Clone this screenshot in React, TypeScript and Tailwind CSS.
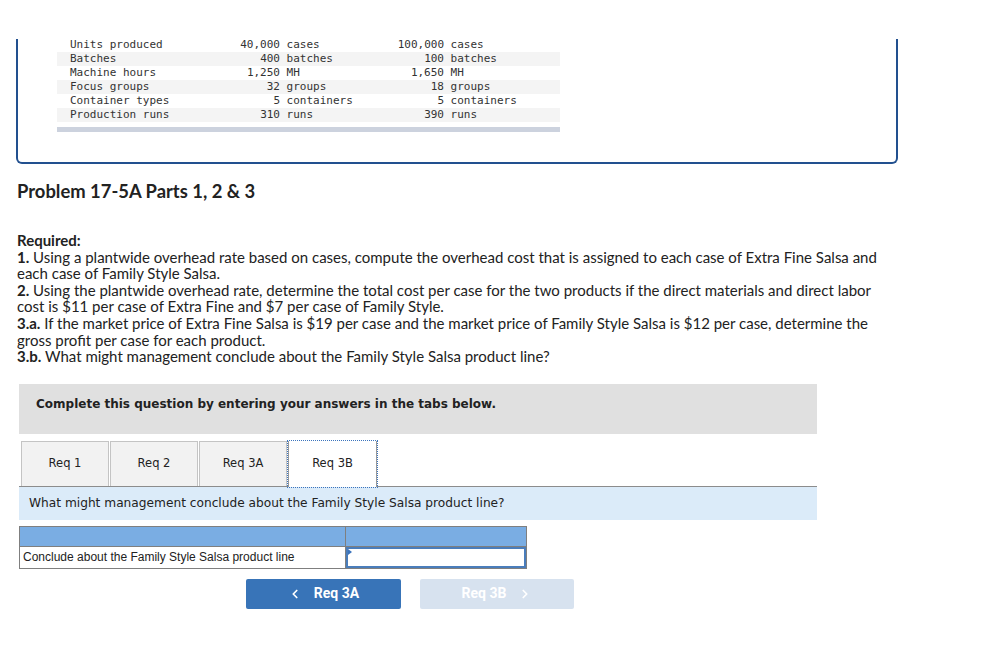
import React from 'react';
import { ChevronLeft, ChevronRight } from 'lucide-react';

interface DataRow {
  label: string;
  fineQty: string;
  fineUnit: string;
  familyQty: string;
  familyUnit: string;
}

const rows: DataRow[] = [
  { label: 'Units produced', fineQty: '40,000', fineUnit: 'cases', familyQty: '100,000', familyUnit: 'cases' },
  { label: 'Batches', fineQty: '400', fineUnit: 'batches', familyQty: '100', familyUnit: 'batches' },
  { label: 'Machine hours', fineQty: '1,250', fineUnit: 'MH', familyQty: '1,650', familyUnit: 'MH' },
  { label: 'Focus groups', fineQty: '32', fineUnit: 'groups', familyQty: '18', familyUnit: 'groups' },
  { label: 'Container types', fineQty: '5', fineUnit: 'containers', familyQty: '5', familyUnit: 'containers' },
  { label: 'Production runs', fineQty: '310', fineUnit: 'runs', familyQty: '390', familyUnit: 'runs' },
];

const tabs = ['Req 1', 'Req 2', 'Req 3A', 'Req 3B'];

const App: React.FC = () => {
  return (
    <div className="w-[1006px] h-[651px] bg-white overflow-hidden">
      {/* area above the data box is covered */}
      <div className="h-[39px]" />

      <div className="overflow-hidden">
        <div className="ml-[16px] w-[882px] flex flex-col border-2 border-t-0 border-[#22508f] rounded-b-[6px] pb-[30px]">
          <div className="-mt-[1px] ml-[39px] w-[503px] font-['DejaVu_Sans_Mono',monospace] text-[11px] leading-[14px] text-[#333]">
            {rows.map((r, i) => (
              <div key={r.label} className={`flex h-[14px] items-center whitespace-pre ${i % 2 === 1 ? 'bg-[#f4f4f4]' : ''}`}>
                <span className="w-[153px] pl-[13px]">{r.label}</span>
                <span className="w-[70px] text-right">{r.fineQty}</span>
                <span className="w-[94px]">{' ' + r.fineUnit}</span>
                <span className="w-[70px] text-right">{r.familyQty}</span>
                <span>{' ' + r.familyUnit}</span>
              </div>
            ))}
          </div>
          <div className="mt-[5px] ml-[39px] w-[503px] h-[5px] bg-[#ccd2de]" />
        </div>
      </div>

      <h2 className="mt-[16px] ml-[17px] font-['Lato',sans-serif] font-bold text-[18.4px] leading-[22px] text-[#222]">
        Problem 17-5A Parts 1, 2 &amp; 3
      </h2>

      <div className="mt-[30px] ml-[17px] w-[880px] font-['Lato',sans-serif] text-[15px] leading-[16.6px] text-[#222]">
        <p className="font-bold">Required:</p>
        <p><b>1.</b> Using a plantwide overhead rate based on cases, compute the overhead cost that is assigned to each case of Extra Fine Salsa and each case of Family Style Salsa.</p>
        <p><b>2.</b> Using the plantwide overhead rate, determine the total cost per case for the two products if the direct materials and direct labor cost is $11 per case of Extra Fine and $7 per case of Family Style.</p>
        <p><b>3.a.</b> If the market price of Extra Fine Salsa is $19 per case and the market price of Family Style Salsa is $12 per case, determine the gross profit per case for each product.</p>
        <p><b>3.b.</b> What might management conclude about the Family Style Salsa product line?</p>
      </div>

      <div className="mt-[19px] ml-[19px] w-[798px] h-[50px] bg-[#e0e0e0] flex items-center pl-[17px] pb-[10px] font-['DejaVu_Sans',Verdana,sans-serif] font-bold text-[12px] text-[#222]">
        Complete this question by entering your answers in the tabs below.
      </div>

      <div className="mt-[7px] ml-[21px] flex items-start gap-[1px] font-['DejaVu_Sans',Verdana,sans-serif] text-[11.5px] text-[#222]">
        {tabs.map((t, i) =>
          i === 3 ? (
            <div
              key={t}
              className="relative z-10 w-[89px] h-[46px] -mb-px bg-white border-x border-[#999] outline-1 outline-dotted outline-[#3b74bd] flex items-center justify-center pb-[1px]"
            >
              {t}
            </div>
          ) : (
            <div key={t} className="w-[88px] h-[45px] bg-[#f2f2f2] border border-b-0 border-[#c4c4c4] flex items-center justify-center">
              {t}
            </div>
          )
        )}
      </div>

      <div className="ml-[19px] w-[798px] h-[34px] border-t border-[#8c8c8c] bg-[#dbebf9] flex items-center pl-[10px] font-['DejaVu_Sans',Verdana,sans-serif] text-[12.2px] text-[#222]">
        What might management conclude about the Family Style Salsa product line?
      </div>

      <div className="mt-[6px] ml-[19px] w-[508px] border border-[#7f7f7f] font-['Liberation_Sans',Arial,sans-serif] text-[12px] text-[#222]">
        <div className="flex h-[20px] bg-[#7aade3] border-b border-[#7f7f7f]">
          <div className="w-[326px] border-r border-[#7f7f7f]" />
          <div className="flex-1" />
        </div>
        <div className="flex h-[21px]">
          <div className="w-[326px] border-r border-[#7f7f7f] flex items-center pl-[3px]">
            Conclude about the Family Style Salsa product line
          </div>
          <div className="relative flex-1 border-2 border-[#4a7dbb] bg-white">
            <span className="absolute left-0 top-0 w-0 h-0 border-y-[3px] border-y-transparent border-l-[4px] border-l-[#3b74bd]" />
          </div>
        </div>
      </div>

      <div className="mt-[10px] ml-[246px] flex gap-[19px] font-['Liberation_Sans_Narrow','Roboto',sans-serif] font-bold text-[14px] text-white">
        <button className="w-[155px] h-[30px] rounded-[2px] bg-[#3874b8] flex items-center justify-center gap-[12px]">
          <ChevronLeft size={14} strokeWidth={3} />
          <span>Req 3A</span>
        </button>
        <button className="w-[154px] h-[30px] rounded-[2px] bg-[#d7e2ef] flex items-center justify-center gap-[12px]">
          <span>Req 3B</span>
          <ChevronRight size={14} strokeWidth={3} />
        </button>
      </div>
    </div>
  );
};

export default App;
